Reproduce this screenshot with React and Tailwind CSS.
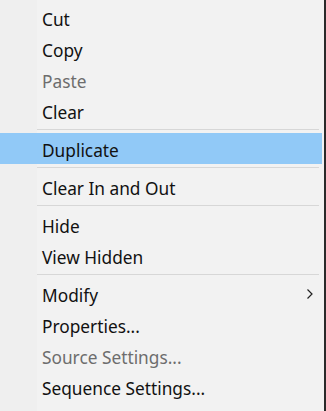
import React from 'react';

const groups = [
  [
    { label: 'Cut' },
    { label: 'Copy' },
    { label: 'Paste', disabled: true },
    { label: 'Clear' },
  ],
  [{ label: 'Duplicate', active: true }],
  [{ label: 'Clear In and Out' }],
  [{ label: 'Hide' }, { label: 'View Hidden' }],
  [
    { label: 'Modify', submenu: true },
    { label: 'Properties...' },
    { label: 'Source Settings...', disabled: true },
    { label: 'Sequence Settings...' },
  ],
];

const MenuItem = ({ item }) => (
  <div
    className={`h-[31px] flex items-center pl-[42px] pr-[8px] pt-[4px] ${
      item.active ? 'bg-[#91c9f7]' : ''
    }`}
  >
    <span className={`flex-1 ${item.disabled ? 'text-[#6d6d6d]' : 'text-[#111]'}`}>
      {item.label}
    </span>
    {item.submenu && (
      <svg width="8" height="12" viewBox="0 0 8 12" className="-mt-[3px]">
        <path d="M1.5 1.5 L6 6 L1.5 10.5" fill="none" stroke="#222" strokeWidth="1.2" />
      </svg>
    )}
  </div>
);

const App = () => {
  return (
    <div
      className="w-[326px] h-[411px] bg-[#f2f2f2] flex overflow-hidden text-[17.3px] leading-none"
      style={{ fontFamily: '"Noto Sans", "Open Sans", sans-serif' }}
    >
      <div className="flex-1 relative pt-[2px] pr-[2px]">
        {/* icon gutter */}
        <div className="absolute left-0 top-0 bottom-0 w-[37px] bg-[#efefef]" />
        <div className="relative">
          {groups.map((group, gi) => (
            <div key={gi}>
              {gi > 0 && (
                <div className="h-[7px] pt-[3px] pl-[37px] pr-[3px]">
                  <div className="h-px bg-[#d7d7d7]" />
                </div>
              )}
              {group.map((item) => (
                <MenuItem key={item.label} item={item} />
              ))}
            </div>
          ))}
        </div>
      </div>
      <div className="w-[2px] bg-[#2a2a2a]" />
    </div>
  );
};

export default App;
